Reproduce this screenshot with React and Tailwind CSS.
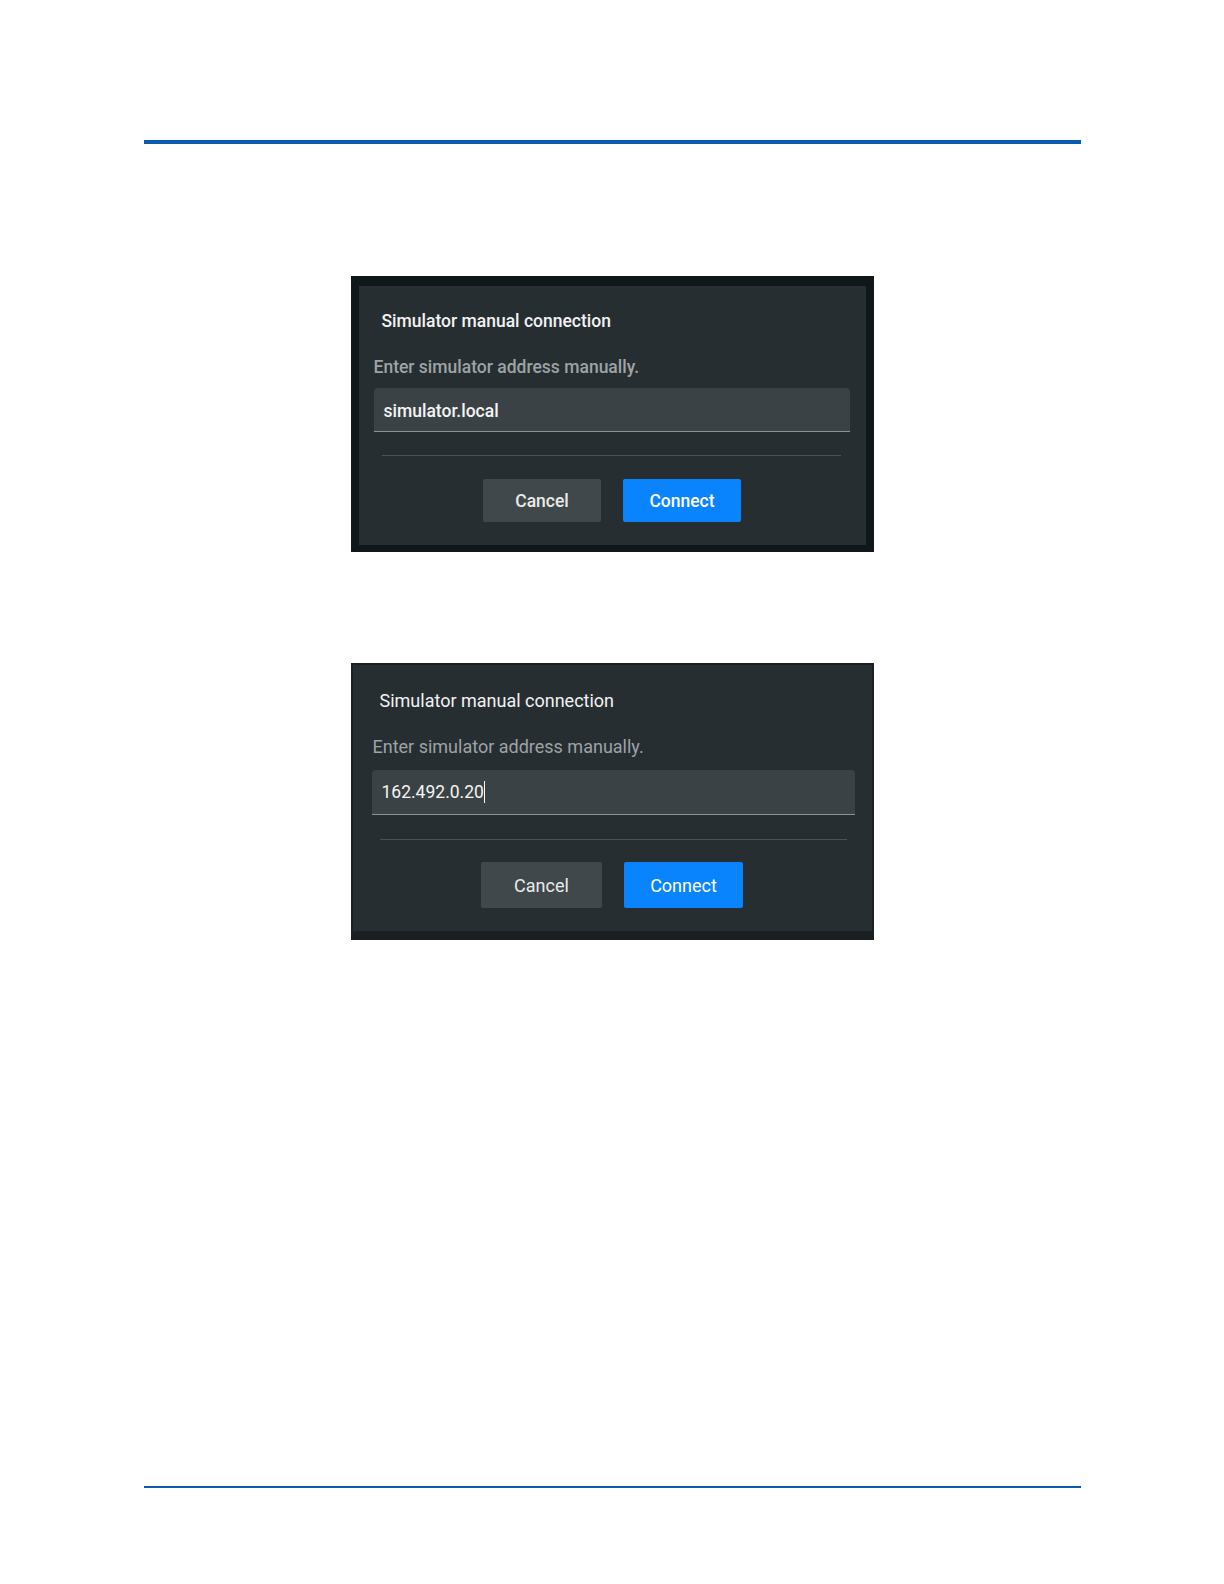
import React from "react";

function Dialog({ v }) {
  // v === 1 : first (blurry) capture, v === 2 : second capture with caret
  const one = v === 1;
  return (
    <div
      className={[
        "w-[523px]",
        one ? "bg-[#10171a] pl-[8px] pr-[8px] pt-[10px] pb-[7px]" : "bg-[#191f23] px-[2px] pt-[2px] pb-[9px]",
      ].join(" ")}
    >
      <div
        className={[
          "bg-[#272e32]",
          one ? "pt-[24px] pb-[23px]" : "pt-[25px] pb-[23px]",
        ].join(" ")}
      >
        <div
          className={[
            "text-[#f2f2f2]",
            one ? "ml-[23px] text-[17.5px] leading-[22px] font-medium" : "ml-[27px] text-[18px] leading-[22px]",
          ].join(" ")}
        >
          Simulator manual connection
        </div>
        <div
          className={[
            "text-[#9ea3a6]",
            one ? "ml-[15px] mt-[24px] text-[17.5px] leading-[22px] font-medium" : "ml-[20px] mt-[24px] text-[18px] leading-[22px]",
          ].join(" ")}
        >
          Enter simulator address manually.
        </div>
        <div
          className={[
            "flex items-center rounded-t-[4px] bg-[#3b4246] border-b border-[#8d9396] pl-[10px] text-[#f4f4f4]",
            one ? "ml-[15px] mt-[10px] w-[476px] h-[44px] pt-[3px] text-[17.5px] font-medium" : "ml-[19px] mt-[12px] w-[483px] h-[45px] text-[17.5px]",
          ].join(" ")}
        >
          {one ? (
            "simulator.local"
          ) : (
            <>
              <span>162.492.0.20</span>
              <span className="inline-block w-px h-[22px] bg-white" />
            </>
          )}
        </div>
        <div
          className={[
            "h-px bg-[#4b5256]",
            one ? "ml-[23px] mt-[23px] w-[459px]" : "ml-[27px] mt-[24px] w-[467px]",
          ].join(" ")}
        />
        <div
          className={[
            "flex justify-center gap-[22px]",
            one ? "mt-[23px]" : "mt-[22px]",
          ].join(" ")}
        >
          <button
            className={[
              "rounded-[2px] bg-[#41484c] text-[#e9eaea]",
              one ? "w-[118px] h-[43px] pt-[2px] text-[17.5px] font-medium" : "w-[121px] h-[46px] text-[18px]",
            ].join(" ")}
          >
            Cancel
          </button>
          <button
            className={[
              "rounded-[2px] bg-[#0a84fc] text-white",
              one ? "w-[118px] h-[43px] pt-[2px] text-[17.5px] font-medium" : "w-[119px] h-[46px] text-[18px]",
            ].join(" ")}
          >
            Connect
          </button>
        </div>
      </div>
    </div>
  );
}

export default function App() {
  return (
    <div
      className="min-h-[1584px] bg-white pt-[140px] pb-[96px]"
      style={{ fontFamily: "Roboto, 'Liberation Sans', sans-serif" }}
    >
      <div className="w-[937px] mx-auto">
        <div className="h-[4px] bg-[#0c5cad]" />

        <div className="mt-[132px] flex flex-col items-center">
          <Dialog v={1} />
          <div className="mt-[111px]">
            <Dialog v={2} />
          </div>
        </div>

        <div className="mt-[546px] h-[2px] bg-[#0c5cad]" />
      </div>
    </div>
  );
}
